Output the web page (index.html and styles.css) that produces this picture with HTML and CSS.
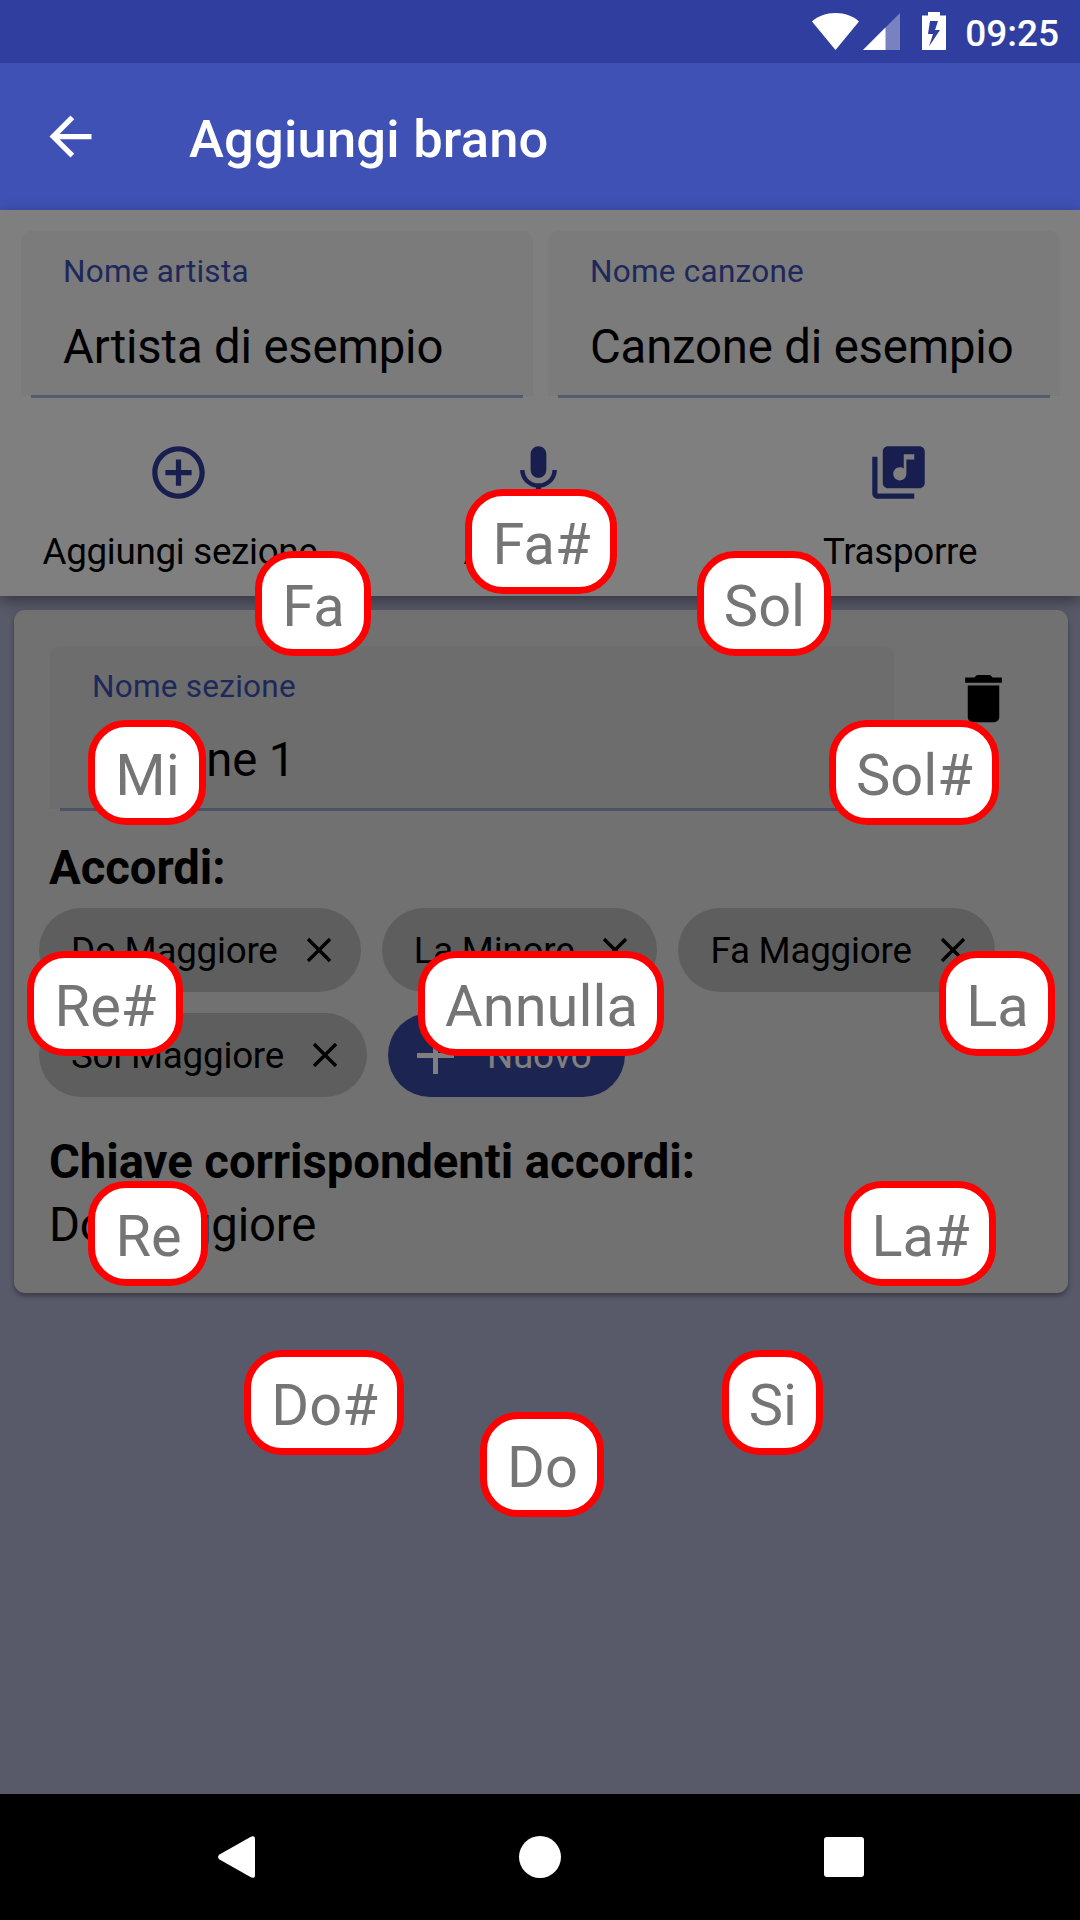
FILE: index.html
```html
<!DOCTYPE html>
<html lang="it">

<head>
    <meta charset="UTF-8">
    <meta name="viewport" content="width=device-width, initial-scale=1.0">
    <title>Aggiungi brano</title>
    <link rel="stylesheet" href="styles.css">
</head>

<body>
    <div class="status-bar">
        <svg class="wifi" width="47" height="37" viewBox="0 0 47 37"><path d="M0 8.5C6 3 14 0 23.500 0S41 3 47 8.500L23.500 37z" fill="#fff"/></svg>
        <svg class="signal" width="37" height="37" viewBox="0 0 37 37"><path d="M37 0v37H0z" fill="#fff" fill-opacity=".35"/><path d="M22.500 14.500V37H0z" fill="#fff"/></svg>
        <svg class="battery" width="24" height="38" viewBox="0 0 24 38"><path fill-rule="evenodd" d="M6 0h12v3.500h6V38H0V3.500h6zM8 9L6 22h5L7 34.500L18 18h-5l3-9z" fill="#fff"/></svg>
        <span class="clock">09:25</span>
    </div>

    <div class="app-bar">
        <svg class="icon" viewBox="0 0 24 24"><path d="M20 11H7.830l5.590-5.590L12 4l-8 8 8 8 1.410-1.410L7.830 13H20v-2z" fill="#fff"/></svg>
        <h1 class="title">Aggiungi brano</h1>
    </div>

    <div class="content">
        <div class="header">
            <div class="fields">
                <div class="field">
                    <div class="field-box">
                        <div class="field-label">Nome artista</div>
                        <div class="field-value">Artista di esempio</div>
                    </div>
                    <div class="underline"></div>
                </div>
                <div class="field">
                    <div class="field-box">
                        <div class="field-label">Nome canzone</div>
                        <div class="field-value">Canzone di esempio</div>
                    </div>
                    <div class="underline"></div>
                </div>
            </div>
            <div class="actions">
                <div class="action">
                    <svg class="icon" viewBox="0 0 24 24"><path d="M13 7h-2v4H7v2h4v4h2v-4h4v-2h-4V7zm-1-5C6.480 2 2 6.480 2 12s4.480 10 10 10 10-4.480 10-10S17.520 2 12 2zm0 18c-4.410 0-8-3.590-8-8s3.590-8 8-8 8 3.590 8 8-3.590 8-8 8z"/></svg>
                    <span>Aggiungi sezione</span>
                </div>
                <div class="action">
                    <svg class="icon" viewBox="0 0 24 24"><path d="M12 14c1.660 0 2.990-1.340 2.990-3L15 5c0-1.660-1.340-3-3-3S9 3.340 9 5v6c0 1.660 1.340 3 3 3zm5.300-3c0 3-2.540 5.100-5.300 5.100S6.700 14 6.700 11H5c0 3.410 2.720 6.230 6 6.720V21h2v-3.280c3.280-.48 6-3.300 6-6.720h-1.700z"/></svg>
                    <span>Ascoltare</span>
                </div>
                <div class="action">
                    <svg class="icon" viewBox="0 0 24 24"><path d="M20 2H8c-1.100 0-2 .9-2 2v12c0 1.100.9 2 2 2h12c1.100 0 2-.9 2-2V4c0-1.100-.9-2-2-2zm-2 5h-3v5.500c0 1.380-1.120 2.500-2.500 2.500S10 13.880 10 12.500s1.120-2.500 2.500-2.500c.57 0 1.080.19 1.500.51V5h4v2zM4 6H2v14c0 1.100.9 2 2 2h14v-2H4V6z"/></svg>
                    <span>Trasporre</span>
                </div>
            </div>
        </div>

        <div class="card">
            <div class="section-row">
                <div class="field">
                    <div class="field-box">
                        <div class="field-label">Nome sezione</div>
                        <div class="field-value">Sezione 1</div>
                    </div>
                    <div class="underline"></div>
                </div>
                <svg class="icon delete" viewBox="0 0 24 24"><path d="M6 19c0 1.100.9 2 2 2h8c1.100 0 2-.9 2-2V7H6v12zM19 4h-3.500l-1-1h-5l-1 1H5v2h14V4z"/></svg>
            </div>
            <h2 class="subtitle">Accordi:</h2>
            <div class="chips">
                <div class="chip">Do Maggiore <svg class="close" viewBox="0 0 24 24"><path d="M1 1l22 22M23 1L1 23"/></svg></div>
                <div class="chip">La Minore <svg class="close" viewBox="0 0 24 24"><path d="M1 1l22 22M23 1L1 23"/></svg></div>
                <div class="chip">Fa Maggiore <svg class="close" viewBox="0 0 24 24"><path d="M1 1l22 22M23 1L1 23"/></svg></div>
                <div class="chip">Sol Maggiore <svg class="close" viewBox="0 0 24 24"><path d="M1 1l22 22M23 1L1 23"/></svg></div>
                <div class="chip new"><svg class="plus" viewBox="0 0 37 37"><path d="M18.500 0v37M0 18.500h37"/></svg>Nuovo</div>
            </div>
            <h2 class="subtitle key-title">Chiave corrispondenti accordi:</h2>
            <div class="key">Do Maggiore</div>
        </div>

        <!-- Note picker -->
        <div class="picker">
            <div class="note do">Do</div>
            <div class="note do-d">Do#</div>
            <div class="note re">Re</div>
            <div class="note re-d">Re#</div>
            <div class="note mi">Mi</div>
            <div class="note fa">Fa</div>
            <div class="note fa-d">Fa#</div>
            <div class="note sol">Sol</div>
            <div class="note sol-d">Sol#</div>
            <div class="note la">La</div>
            <div class="note la-d">La#</div>
            <div class="note si">Si</div>
            <div class="note cancel">Annulla</div>
        </div>
    </div>

    <div class="nav-bar">
        <svg width="37" height="42" viewBox="0 0 37 42"><path d="M32 1.200Q37-1.500 37 3v36q0 4.500-5 1.800L1.500 23.500q-3-2.500 0-5z" fill="#fff"/></svg>
        <div class="home"></div>
        <div class="recent"></div>
    </div>
</body>

</html>
```
FILE: styles.css
```css
* {
    box-sizing: border-box;
}

body {
    display: flex;
    flex-direction: column;
    width: 1080px;
    height: 1920px;
    margin: 0;
    overflow: hidden;
    font-family: Roboto, sans-serif;
    color: #000;
}

svg {
    display: block;
    flex-shrink: 0;
}

.icon {
    width: 63px;
    height: 63px;
}

.status-bar {
    display: flex;
    height: 63px;
    padding: 12px 21px 0 0;
    justify-content: flex-end;
    background: #303f9f;
    color: #fff;
}

.wifi,
.signal {
    margin-top: 1px;
}

.signal {
    margin-left: 4px;
}

.battery {
    margin-left: 22px;
}

.clock {
    margin-left: 19px;
    font-size: 37px;
    font-weight: 500;
    line-height: 43px;
}

.app-bar {
    display: flex;
    align-items: center;
    height: 147px;
    padding-left: 39px;
    background: #3f51b5;
    color: #fff;
}

.app-bar .icon {
    margin-bottom: 1px;
}

.title {
    margin: 4px 0 0 87px;
    font-size: 52.5px;
    font-weight: 500;
    line-height: 62px;
    letter-spacing: 0.2px;
}

.content {
    position: relative;
    flex: 1;
    background: #b0b4d2;
}

.header {
    height: 386px;
    padding-top: 21px;
    background: #fff;
    box-shadow: 0 5px 14px rgba(0, 0, 0, 0.4);
}

.fields {
    display: flex;
    gap: 15px;
    padding: 0 20px 0 21px;
}

.field {
    flex: 1;
}

.field-box {
    height: 165px;
    padding: 22px 0 0 42px;
    background: rgba(0, 0, 0, 0.035);
    border-radius: 10px 10px 0 0;
    white-space: nowrap;
}

.field-label {
    font-size: 31.5px;
    line-height: 37px;
    letter-spacing: 0.25px;
    color: #3f51b5;
}

.field-value {
    margin-top: 30px;
    font-size: 47.25px;
    line-height: 55px;
    letter-spacing: -0.15px;
}

.underline {
    height: 3px;
    margin: -1px 10px 0;
    background: rgba(63, 81, 181, 0.42);
}

.actions {
    display: grid;
    grid-template-columns: repeat(3, 1fr);
    margin-top: 43px;
}

.action {
    display: flex;
    flex-direction: column;
    align-items: center;
    gap: 26px;
    font-size: 36.75px;
    line-height: 43px;
    letter-spacing: -0.3px;
}

.action .icon {
    margin-right: 3px;
    fill: #303f9f;
}

.card {
    height: 683px;
    margin: 14px 12px 0 14px;
    padding: 36px 36px 0;
    background: #e2e2e2;
    border-radius: 11px;
    box-shadow: 0 3px 5px rgba(0, 0, 0, 0.35);
}

.section-row {
    display: flex;
    justify-content: space-between;
}

.section-row .field {
    flex: 0 0 844px;
}

.section-row .field-box {
    height: 163px;
}

.section-row .field-value {
    margin-top: 28px;
}

.delete {
    margin: 21px 17px 0 0;
}

.subtitle {
    margin: 30px 0 0 -1px;
    font-size: 47.25px;
    font-weight: 700;
    line-height: 55px;
    letter-spacing: -0.05px;
}

.chips {
    display: flex;
    flex-wrap: wrap;
    gap: 21px;
    margin: 12px -20px 0 -11px;
}

.chip {
    display: flex;
    align-items: center;
    height: 84px;
    padding: 0 30px 0 32px;
    background: #bcbcbc;
    border-radius: 42px;
    font-size: 36.75px;
    line-height: 43px;
    letter-spacing: -0.22px;
}

.close {
    width: 24px;
    height: 24px;
    margin-left: 29px;
    stroke: #000;
    stroke-width: 3.4;
}

.chip.new {
    padding: 0 33px 0 29px;
    background: #3949a3;
    color: #fff;
}

.plus {
    width: 37px;
    height: 37px;
    margin-right: 33px;
    stroke: #fff;
    stroke-width: 5;
}

.key-title {
    margin-top: 38px;
}

.key {
    margin: 8px 0 0 -1px;
    font-size: 47.25px;
    line-height: 55px;
    letter-spacing: -0.15px;
}

.picker {
    position: absolute;
    inset: 0;
    background: rgba(0, 0, 0, 0.5);
}

.note {
    position: absolute;
    height: 105px;
    padding-left: 1px;
    border: 7px solid #f00;
    border-radius: 38px;
    background: #fff;
    color: #757575;
    font-size: 57.75px;
    line-height: 97px;
    text-align: center;
}

.fa-d { left: 465px; top: 279px; width: 152px; }
.fa { left: 255px; top: 341px; width: 116px; }
.sol { left: 697px; top: 341px; width: 134px; }
.mi { left: 88px; top: 510px; width: 118px; }
.sol-d { left: 829px; top: 510px; width: 170px; }
.re-d { left: 27px; top: 741px; width: 156px; }
.cancel { left: 418px; top: 741px; width: 246px; }
.la { left: 939px; top: 741px; width: 116px; }
.re { left: 88px; top: 971px; width: 120px; }
.la-d { left: 844px; top: 971px; width: 152px; }
.do-d { left: 244px; top: 1140px; width: 160px; }
.si { left: 722px; top: 1140px; width: 101px; }
.do { left: 480px; top: 1202px; width: 124px; }

.nav-bar {
    display: flex;
    justify-content: space-between;
    align-items: center;
    height: 126px;
    padding: 0 216px 0 218px;
    background: #000;
}

.home {
    width: 42px;
    height: 42px;
    border-radius: 50%;
    background: #fff;
}

.recent {
    width: 40px;
    height: 40px;
    border-radius: 3px;
    background: #fff;
}
```
